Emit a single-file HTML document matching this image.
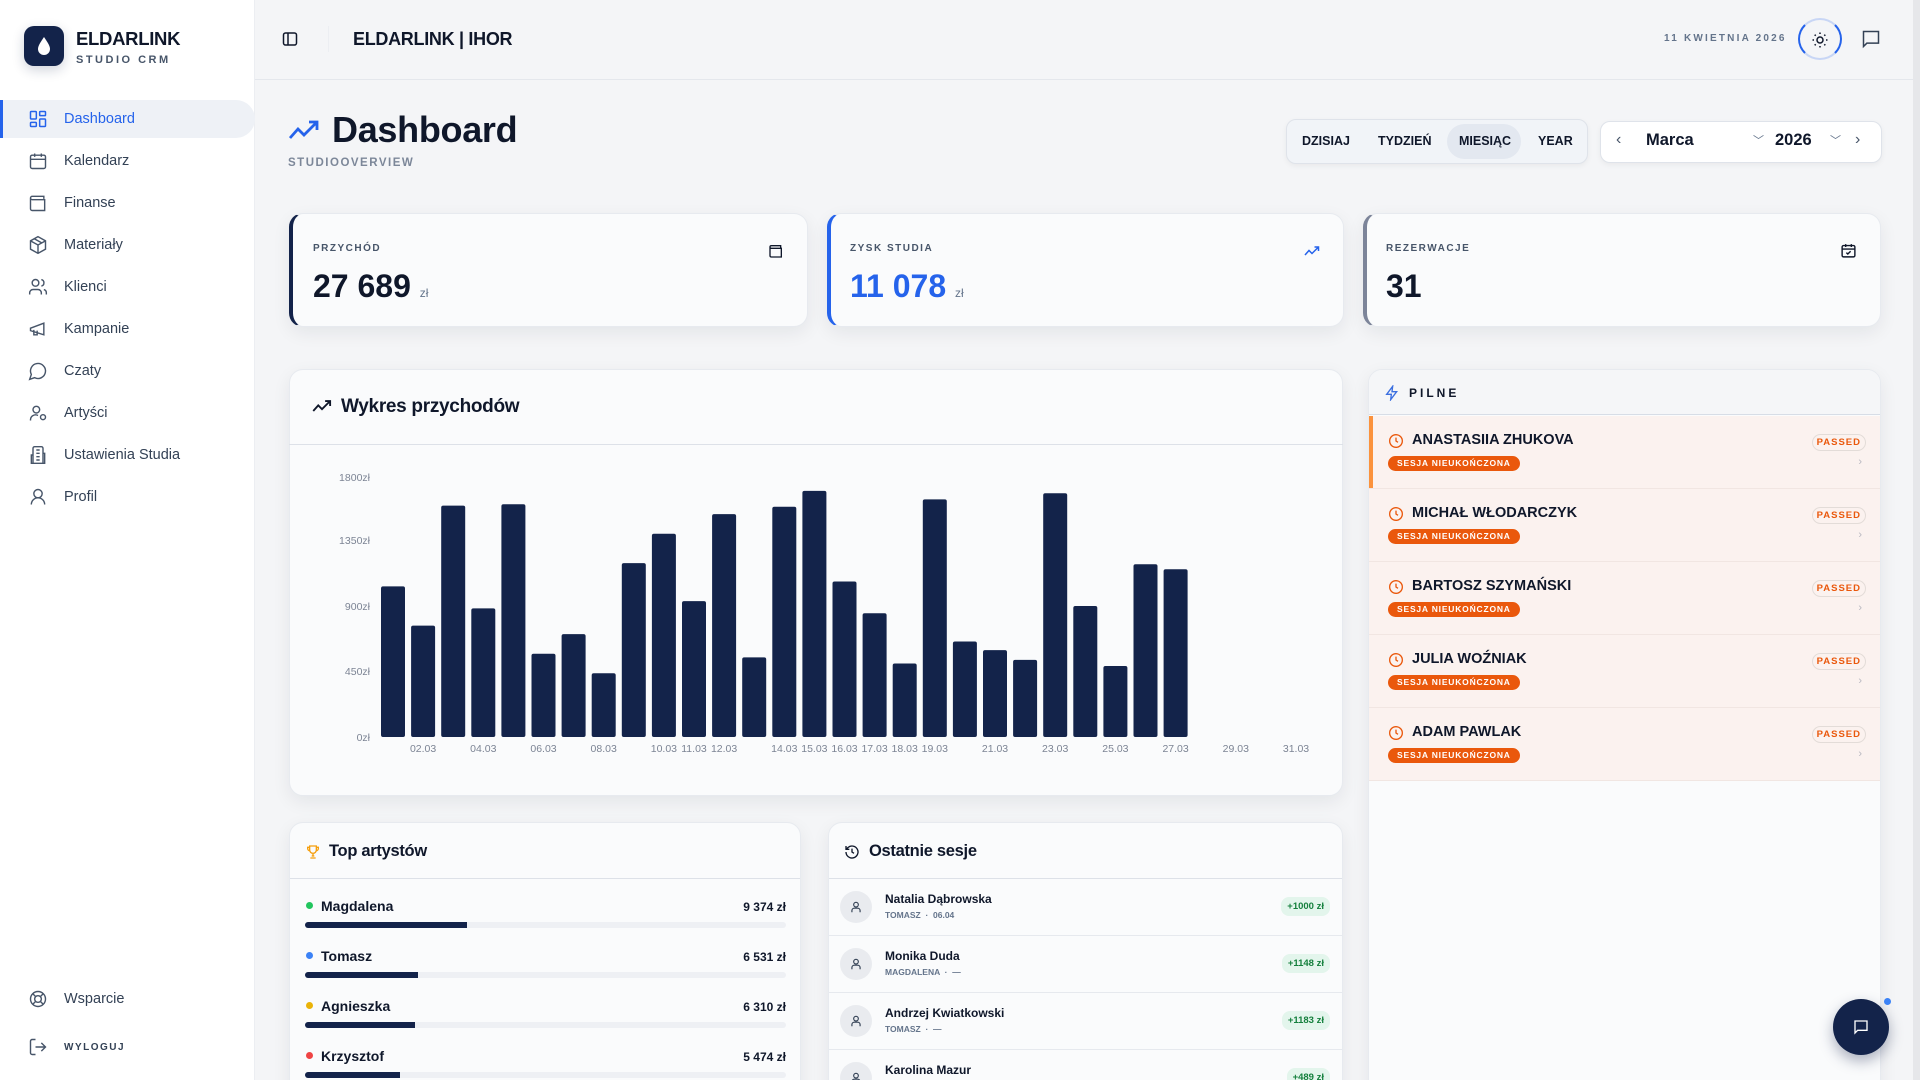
<!DOCTYPE html>
<html style="height:1080px;overflow:hidden"><head><meta charset="utf-8"><style>
*{box-sizing:border-box;margin:0;padding:0}
html,body{width:1920px;height:1080px;overflow:hidden}
body{background:#f4f5f7;font-family:"Liberation Sans",sans-serif;color:#0f172a;position:relative}
.abs{position:absolute}
.side{left:0;top:0;width:255px;height:1080px;background:#fff;border-right:1px solid #eceef2}
.logo{left:24px;top:26px;width:40px;height:40px;background:#13234a;border-radius:10px;box-shadow:0 4px 12px rgba(19,35,74,.2)}
.nav{left:0;width:255px;height:38px;display:flex;align-items:center;font-size:14.5px;color:#334155}
.nav svg{position:absolute;left:28px}
.nav span{position:absolute;left:64px}
.nav.act{background:#eef1f6;border-radius:0 20px 20px 0;color:#2563eb;border-left:3px solid #2563eb}
.card{background:#fafbfc;border:1px solid #e7eaef;border-radius:14px;box-shadow:0 6px 18px rgba(15,23,42,.07)}
.lbl{font-size:10px;font-weight:700;letter-spacing:1.5px;color:#475569}
.row{left:0;width:100%;height:73px;background:#fbf2ef;border-bottom:1px solid #f1e6e2}
.nm{position:absolute;left:43px;top:16px;font-size:14.5px;font-weight:800;color:#0f172a}
.bd{position:absolute;left:19px;top:40px;background:#ea580c;color:#fff;font-size:8.5px;font-weight:800;letter-spacing:.8px;border-radius:8px;padding:2px 9px;height:15px;line-height:11px}
.ps{position:absolute;right:14px;top:18px;border:1px solid #e3dcd8;border-radius:9px;color:#ea580c;font-size:9.5px;font-weight:800;letter-spacing:1px;padding:2px 4px}
.chev{position:absolute;right:18px;top:40px;color:#b8b8c0;font-size:11px}
.ck{position:absolute;left:19px;top:17px}
</style></head><body>
<div class="abs side"></div>
<div class="abs logo"><svg width="40" height="40" viewBox="0 0 40 40"><path d="M20 11 C16 17 14 20 14 23 a6 6 0 0 0 12 0 C26 20 24 17 20 11z" fill="#fff"/></svg></div>
<div class="abs" style="left:76px;top:28px;font-size:18.5px;font-weight:700;letter-spacing:-.3px">ELDARLINK</div>
<div class="abs" style="left:76px;top:54px;font-size:11px;font-weight:700;letter-spacing:2.5px;color:#475569">STUDIO CRM</div>

<div class="abs nav act" style="top:100px"><svg style="left:25px" width="20" height="20" viewBox="0 0 24 24" fill="none" stroke="#2563eb" stroke-width="1.8"><rect x="3" y="3" width="7" height="9" rx="1"/><rect x="14" y="3" width="7" height="5" rx="1"/><rect x="14" y="12" width="7" height="9" rx="1"/><rect x="3" y="16" width="7" height="5" rx="1"/></svg><span style="left:61px">Dashboard</span></div>
<div class="abs nav" style="top:142px"><svg width="20" height="20" viewBox="0 0 24 24" fill="none" stroke="#475569" stroke-width="1.7"><rect x="3" y="5" width="18" height="16" rx="2"/><path d="M8 3v4M16 3v4M3 10h18M8 14h.01M12 14h.01M16 14h.01M8 18h.01M12 18h.01"/></svg><span>Kalendarz</span></div>
<div class="abs nav" style="top:184px"><svg width="20" height="20" viewBox="0 0 24 24" fill="none" stroke="#475569" stroke-width="1.7"><path d="M19 7V4H5a2 2 0 0 0 0 4h15v13H5a2 2 0 0 1-2-2V6"/><path d="M16 14h.01"/></svg><span>Finanse</span></div>
<div class="abs nav" style="top:226px"><svg width="20" height="20" viewBox="0 0 24 24" fill="none" stroke="#475569" stroke-width="1.7"><path d="M12 2 3 7v10l9 5 9-5V7z M3 7l9 5 9-5 M12 12v10 M7.5 4.5l9 5"/></svg><span>Materiały</span></div>
<div class="abs nav" style="top:268px"><svg width="20" height="20" viewBox="0 0 24 24" fill="none" stroke="#475569" stroke-width="1.7"><circle cx="9" cy="7" r="4"/><path d="M2 21v-2a4 4 0 0 1 4-4h6a4 4 0 0 1 4 4v2M16 3.1a4 4 0 0 1 0 7.8M22 21v-2a4 4 0 0 0-3-3.9"/></svg><span>Klienci</span></div>
<div class="abs nav" style="top:310px"><svg width="20" height="20" viewBox="0 0 24 24" fill="none" stroke="#475569" stroke-width="1.7"><path d="M3 11l16-6v14L3 14z M7 13v6h4v-5"/></svg><span>Kampanie</span></div>
<div class="abs nav" style="top:352px"><svg width="20" height="20" viewBox="0 0 24 24" fill="none" stroke="#475569" stroke-width="1.7"><path d="M7.9 20A9 9 0 1 0 4 16.1L2 22z"/></svg><span>Czaty</span></div>
<div class="abs nav" style="top:394px"><svg width="20" height="20" viewBox="0 0 24 24" fill="none" stroke="#475569" stroke-width="1.7"><circle cx="10" cy="8" r="4"/><path d="M3 21v-1a6 6 0 0 1 9-5"/><circle cx="18" cy="17" r="3"/></svg><span>Artyści</span></div>
<div class="abs nav" style="top:436px"><svg width="20" height="20" viewBox="0 0 24 24" fill="none" stroke="#475569" stroke-width="1.7"><path d="M6 22V4a2 2 0 0 1 2-2h8a2 2 0 0 1 2 2v18z M6 12H4v10h16V10h-2 M10 6h4M10 10h4M10 14h4M10 18h4"/></svg><span>Ustawienia Studia</span></div>
<div class="abs nav" style="top:478px"><svg width="20" height="20" viewBox="0 0 24 24" fill="none" stroke="#475569" stroke-width="1.7"><circle cx="12" cy="8" r="5"/><path d="M20 21a8 8 0 0 0-16 0"/></svg><span>Profil</span></div>
<div class="abs nav" style="top:980px"><svg width="20" height="20" viewBox="0 0 24 24" fill="none" stroke="#475569" stroke-width="1.7"><circle cx="12" cy="12" r="9"/><circle cx="12" cy="12" r="4"/><path d="M5.6 5.6l3.6 3.6M14.8 14.8l3.6 3.6M14.8 9.2l3.6-3.6M5.6 18.4l3.6-3.6"/></svg><span>Wsparcie</span></div>
<div class="abs nav" style="top:1028px"><svg width="20" height="20" viewBox="0 0 24 24" fill="none" stroke="#475569" stroke-width="1.7"><path d="M9 21H5a2 2 0 0 1-2-2V5a2 2 0 0 1 2-2h4M16 17l5-5-5-5M21 12H9"/></svg><span style="font-size:10px;font-weight:700;letter-spacing:1.5px">WYLOGUJ</span></div>

<div class="abs" style="left:255px;top:79px;width:1658px;height:1px;background:#e4e7ec"></div>
<div class="abs" style="left:1913px;top:0;width:7px;height:1080px;background:#e6e7ea"></div>
<svg class="abs" style="left:282px;top:31px" width="16" height="16" viewBox="0 0 16 16" fill="none" stroke="#0f172a" stroke-width="1.5"><rect x="1.5" y="2" width="13" height="12" rx="2"/><path d="M6 2v12"/></svg>
<div class="abs" style="left:328px;top:26px;width:1px;height:26px;background:#eceef2"></div>
<div class="abs" style="left:353px;top:29px;font-size:18px;font-weight:700;letter-spacing:-.3px">ELDARLINK | IHOR</div>
<div class="abs" style="left:1664px;top:33px;font-size:10px;font-weight:700;letter-spacing:2.2px;color:#64748b">11 KWIETNIA 2026</div>
<div class="abs" style="left:1798px;top:18px;width:44px;height:42px;border-radius:50%;border:2px solid #2563eb;border-top-color:#c8d6f5;border-bottom-color:#c8d6f5"></div>
<svg class="abs" style="left:1811px;top:31px" width="18" height="18" viewBox="0 0 24 24" fill="none" stroke="#0f172a" stroke-width="2"><circle cx="12" cy="12" r="4"/><path d="M12 2v2M12 20v2M4.9 4.9l1.4 1.4M17.7 17.7l1.4 1.4M2 12h2M20 12h2M4.9 19.1l1.4-1.4M17.7 6.3l1.4-1.4"/></svg>
<svg class="abs" style="left:1861px;top:29px" width="20" height="20" viewBox="0 0 24 24" fill="none" stroke="#334155" stroke-width="1.8"><path d="M3 3h18v14H7l-4 4z"/></svg>

<svg class="abs" style="left:288px;top:118px" width="32" height="24" viewBox="0 0 32 24" fill="none" stroke="#2563eb" stroke-width="2.8"><path d="M2 20 10 11l6 6L29 4M21 4h8v8"/></svg>
<div class="abs" style="left:332px;top:109px;font-size:36px;font-weight:700;letter-spacing:-.3px">Dashboard</div>
<div class="abs" style="left:288px;top:157px;font-size:11.5px;font-weight:700;letter-spacing:1.5px;color:#7c8799">STUDIOOVERVIEW</div>

<div class="abs" style="left:1286px;top:119px;width:302px;height:45px;background:#f1f4f8;border:1px solid #dfe3ea;border-radius:10px;box-shadow:0 2px 6px rgba(0,0,0,.05)"></div>
<div class="abs" style="left:1447px;top:124px;width:74px;height:35px;background:#e3e8f0;border-radius:18px"></div>
<div class="abs" style="top:134px;left:1302px;font-size:12.5px;font-weight:700">DZISIAJ</div>
<div class="abs" style="top:134px;left:1378px;font-size:12.5px;font-weight:700">TYDZIEŃ</div>
<div class="abs" style="top:134px;left:1459px;font-size:12.5px;font-weight:700">MIESIĄC</div>
<div class="abs" style="top:134px;left:1538px;font-size:12.5px;font-weight:700">YEAR</div>
<div class="abs" style="left:1600px;top:121px;width:282px;height:42px;background:#fff;border:1px solid #dfe3ea;border-radius:10px;box-shadow:0 2px 6px rgba(0,0,0,.05)"></div>
<div class="abs" style="left:1616px;top:131px;font-size:16px;color:#475569">‹</div>
<div class="abs" style="left:1646px;top:131px;font-size:16.5px;font-weight:700">Marca</div>
<div class="abs" style="left:1753px;top:132px;font-size:11px;color:#64748b">﹀</div>
<div class="abs" style="left:1775px;top:131px;font-size:16.5px;font-weight:700">2026</div>
<div class="abs" style="left:1830px;top:132px;font-size:11px;color:#64748b">﹀</div>
<div class="abs" style="left:1855px;top:131px;font-size:16px;color:#475569">›</div>

<div class="abs card" style="left:289px;top:213px;width:519px;height:114px;border-left:4px solid #13234a"></div>
<div class="abs lbl" style="left:313px;top:243px">PRZYCHÓD</div>
<div class="abs" style="left:313px;top:268px;font-size:32px;font-weight:700">27 689 <span style="font-size:12px;color:#64748b;font-weight:400">zł</span></div>
<svg class="abs" style="left:768px;top:243px" width="16" height="16" viewBox="0 0 24 24" fill="none" stroke="#0f172a" stroke-width="2"><path d="M19 7V4H5a2 2 0 0 0 0 4h15v13H5a2 2 0 0 1-2-2V6"/><path d="M16 14h.01"/></svg>
<div class="abs card" style="left:827px;top:213px;width:517px;height:114px;border-left:4px solid #2563eb"></div>
<div class="abs lbl" style="left:850px;top:243px">ZYSK STUDIA</div>
<div class="abs" style="left:850px;top:268px;font-size:32px;font-weight:700;color:#2563eb">11 078 <span style="font-size:12px;color:#64748b;font-weight:400">zł</span></div>
<svg class="abs" style="left:1304px;top:244px" width="16" height="14" viewBox="0 0 32 24" fill="none" stroke="#2563eb" stroke-width="3"><path d="M2 20 10 11l6 6L29 4M21 4h8v8"/></svg>
<div class="abs card" style="left:1363px;top:213px;width:518px;height:114px;border-left:4px solid #7c8499"></div>
<div class="abs lbl" style="left:1386px;top:243px">REZERWACJE</div>
<div class="abs" style="left:1386px;top:268px;font-size:32px;font-weight:700">31</div>
<svg class="abs" style="left:1840px;top:242px" width="17" height="17" viewBox="0 0 24 24" fill="none" stroke="#0f172a" stroke-width="2"><rect x="3" y="5" width="18" height="16" rx="2"/><path d="M8 3v4M16 3v4M3 10h18M9 15l2 2 4-4"/></svg>

<div class="abs card" style="left:289px;top:369px;width:1054px;height:427px"></div>
<div class="abs" style="left:289px;top:444px;width:1054px;height:1px;background:#dde1e8"></div>
<svg class="abs" style="left:312px;top:398px" width="20" height="16" viewBox="0 0 32 24" fill="none" stroke="#0f172a" stroke-width="3"><path d="M2 20 10 11l6 6L29 4M21 4h8v8"/></svg>
<div class="abs" style="left:341px;top:396px;font-size:19px;font-weight:700;letter-spacing:-.3px">Wykres przychodów</div>
<svg class="abs" style="left:0;top:0" width="1920" height="1080" font-family="Liberation Sans, sans-serif">
<g font-size="10.5" fill="#7c8494" text-anchor="end">
<text x="370" y="481">1800zł</text><text x="370" y="544">1350zł</text><text x="370" y="610">900zł</text><text x="370" y="675">450zł</text><text x="370" y="741">0zł</text></g>
<g fill="#13234a" id="bars"></g>
<g font-size="10.5" fill="#7c8494" text-anchor="middle" id="xl"></g>
</svg>

<div class="abs card" style="left:1368px;top:369px;width:513px;height:740px;overflow:hidden;background:#fafbfc">
<div class="abs" style="left:0;top:0;width:100%;height:45px;background:#f5f6f8;border-bottom:1px solid #d7dde6"></div>
<svg class="abs" style="left:15px;top:15px" width="16" height="16" viewBox="0 0 24 24" fill="none" stroke="#3b6fe0" stroke-width="2"><path d="M13 2 4 14h7l-1 8 9-12h-7z"/></svg>
<div class="abs" style="left:40px;top:16px;font-size:12px;font-weight:800;letter-spacing:3px">PILNE</div>
<div id="rows"></div>
</div>

<div class="abs card" style="left:289px;top:822px;width:512px;height:300px;overflow:hidden">
<div class="abs" style="left:0;top:55px;width:100%;height:1px;background:#dde1e8"></div>
<svg class="abs" style="left:15px;top:20px" width="16" height="18" viewBox="0 0 24 24" fill="none" stroke="#f59e0b" stroke-width="2"><path d="M7 3h10v6a5 5 0 0 1-10 0z M7 5H4v2a3 3 0 0 0 3 3M17 5h3v2a3 3 0 0 1-3 3M12 14v4M8 21h8M10 18h4"/></svg>
<div class="abs" style="left:39px;top:19px;font-size:16.5px;font-weight:700;letter-spacing:-.3px">Top artystów</div>
<div id="arts"></div>
</div>

<div class="abs card" style="left:828px;top:822px;width:515px;height:300px;overflow:hidden">
<div class="abs" style="left:0;top:55px;width:100%;height:1px;background:#dde1e8"></div>
<svg class="abs" style="left:15px;top:21px" width="16" height="16" viewBox="0 0 24 24" fill="none" stroke="#0f172a" stroke-width="2"><path d="M3 12a9 9 0 1 0 3-6.7L3 8M3 3v5h5M12 7v5l3 2"/></svg>
<div class="abs" style="left:40px;top:19px;font-size:16.5px;font-weight:700;letter-spacing:-.3px">Ostatnie sesje</div>
<div id="ses"></div>
</div>

<div class="abs" style="left:1833px;top:999px;width:56px;height:56px;border-radius:50%;background:#13234a;box-shadow:0 6px 14px rgba(19,35,74,.35)"></div>
<svg class="abs" style="left:1853px;top:1019px" width="16" height="16" viewBox="0 0 24 24" fill="none" stroke="#fff" stroke-width="2"><path d="M3 3h18v14H7l-4 4z"/></svg>
<div class="abs" style="left:1884px;top:998px;width:7px;height:7px;border-radius:50%;background:#3b82f6"></div>

<script>
var tops=[479,511,413,497,412,534,518,550,460,436,491,420,537,414,401,475,501,542,408,524,531,539,403,495,544,461,465];
var b='';tops.forEach(function(t,i){var x=381+i*30.1;var y=(t-602)*1.2245+737;b+='<rect x="'+x.toFixed(1)+'" y="'+y.toFixed(1)+'" width="24" height="'+(737-y).toFixed(1)+'" rx="2"/>';});
document.getElementById('bars').innerHTML=b;
var d=[2,4,6,8,10,11,12,14,15,16,17,18,19,21,23,25,27,29,31],l='';
d.forEach(function(k){var x=381+(k-1)*30.1+12;l+='<text x="'+x.toFixed(1)+'" y="752">'+(k<10?'0'+k:k)+'.03</text>';});
document.getElementById('xl').innerHTML=l;
var n=['ANASTASIIA ZHUKOVA','MICHAŁ WŁODARCZYK','BARTOSZ SZYMAŃSKI','JULIA WOŹNIAK','ADAM PAWLAK'],r='';
n.forEach(function(s,i){r+='<div class="abs row" style="top:'+(46+i*73)+'px;'+(i==0?'box-shadow:inset 4px 0 0 #fb923c':'')+'"><svg class="ck" width="16" height="16" viewBox="0 0 24 24" fill="none" stroke="#ea580c" stroke-width="2"><circle cx="12" cy="12" r="9.5"/><path d="M12 7v5l3 2"/></svg><div class="nm">'+s+'</div><div class="bd">SESJA NIEUKOŃCZONA</div><div class="ps">PASSED</div><div class="chev">›</div></div>';});
document.getElementById('rows').innerHTML=r;
var a=[['Magdalena','9 374 zł','#22c55e',162],['Tomasz','6 531 zł','#3b82f6',113],['Agnieszka','6 310 zł','#eab308',110],['Krzysztof','5 474 zł','#ef4444',95]],h='';
a.forEach(function(s,i){var y=75+i*50;h+='<div class="abs" style="left:16px;top:'+(y+4)+'px;width:7px;height:7px;border-radius:50%;background:'+s[2]+'"></div><div class="abs" style="left:31px;top:'+y+'px;font-size:14px;font-weight:700">'+s[0]+'</div><div class="abs" style="right:14px;top:'+(y+2)+'px;font-size:12px;font-weight:700">'+s[1]+'</div><div class="abs" style="left:15px;top:'+(y+24)+'px;width:481px;height:6px;border-radius:3px;background:#eef0f4"><div style="width:'+s[3]+'px;height:6px;background:#13234a;border-radius:3px 0 0 3px"></div></div>';});
document.getElementById('arts').innerHTML=h;
var s=[['Natalia Dąbrowska','TOMASZ','06.04','+1000 zł'],['Monika Duda','MAGDALENA','—','+1148 zł'],['Andrzej Kwiatkowski','TOMASZ','—','+1183 zł'],['Karolina Mazur','MAGDALENA','—','+489 zł']],q='';
s.forEach(function(e,i){var y=56+i*57;q+='<div class="abs" style="left:0;top:'+y+'px;width:100%;height:57px;border-bottom:1px solid #e6e9ee"><div class="abs" style="left:11px;top:12px;width:32px;height:32px;border-radius:50%;background:#e9ebef"></div><svg class="abs" style="left:20px;top:21px" width="14" height="14" viewBox="0 0 24 24" fill="none" stroke="#334155" stroke-width="2"><circle cx="12" cy="8" r="4"/><path d="M5 21v-3a4 4 0 0 1 4-4h6a4 4 0 0 1 4 4v3"/></svg><div class="abs" style="left:56px;top:13px;font-size:12px;font-weight:700">'+e[0]+'</div><div class="abs" style="left:56px;top:31px;font-size:8.5px;font-weight:700;color:#64748b">'+e[1]+' &nbsp;·&nbsp; '+e[2]+'</div><div class="abs" style="right:12px;top:18px;background:#e3f5ec;color:#15803d;font-size:9.5px;font-weight:700;border-radius:8px;padding:4px 6px">'+e[3]+'</div></div>';});
document.getElementById('ses').innerHTML=q;
</script>
</body></html>
